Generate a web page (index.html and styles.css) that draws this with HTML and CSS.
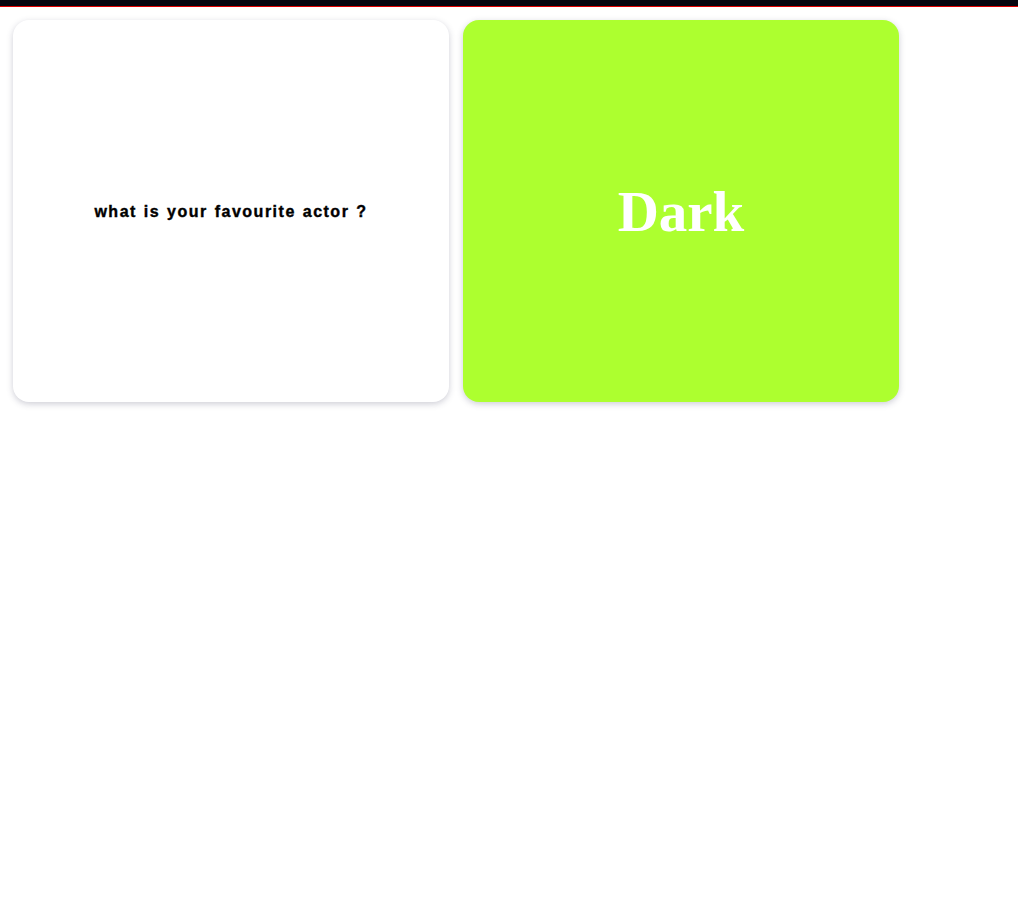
FILE: index.html
```html
<!DOCTYPE html>
<html>
<head>
<meta charset="utf-8">
<link rel="stylesheet" href="styles.css">
</head>
<body>
<div class="topbar"></div>
<div class="cards">
  <div class="card card-front">
    <p class="question">what is your favourite actor ?</p>
  </div>
  <div class="card card-back">
    <p class="answer">Dark</p>
  </div>
</div>
</body>
</html>
```
FILE: styles.css
```css
html, body {
  margin: 0;
  padding: 0;
  background: #ffffff;
}
.topbar {
  height: 6px;
  background: #05050f;
  border-bottom: 1px solid #e00000;
}
.cards {
  display: flex;
  gap: 14px;
  padding: 13px;
}
.card {
  width: 436px;
  height: 382px;
  border-radius: 16px;
  display: flex;
  align-items: center;
  justify-content: center;
  box-shadow: 0 2px 6px rgba(60, 60, 90, 0.25);
}
.card-front {
  background: #ffffff;
}
.card-back {
  background: #adff2f;
}
.question {
  margin: 0;
  padding-top: 2px;
  font-family: "Liberation Sans", Arial, sans-serif;
  font-weight: bold;
  font-size: 16px;
  letter-spacing: 1.5px;
  word-spacing: 1px;
  color: #000;
  -webkit-text-stroke: 0.4px #000;
}
.answer {
  margin: 0;
  font-family: "Liberation Serif", "Times New Roman", serif;
  font-weight: bold;
  font-size: 57px;
  color: #ffffff;
}
```
